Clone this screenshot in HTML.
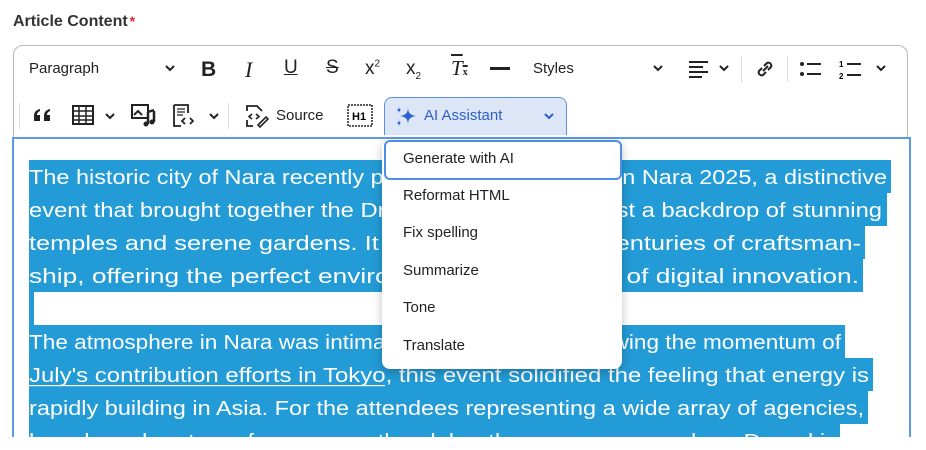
<!DOCTYPE html>
<html><head><meta charset="utf-8"><style>
*{margin:0;padding:0;box-sizing:border-box}
html,body{width:926px;height:450px;overflow:hidden}
body{background:#fff;font-family:"Liberation Sans",sans-serif;position:relative;color:#222}
.a{position:absolute}
.lbl{left:13px;top:13px;font-size:16px;font-weight:bold;color:#333}
.lbl span{color:#d9262b;font-size:14px;vertical-align:top;margin-left:2px}
.tb{left:13px;top:45px;width:895px;height:120px;border:1px solid #b8b8b8;border-radius:10px}
.t{font-size:15px;color:#222}
.ic{position:absolute;font-size:19px;color:#222;line-height:1}
.sep{position:absolute;width:1px;height:26px;background:#ddd}
.clip{left:0;top:0;width:926px;height:437px;overflow:hidden}
.ed{left:12px;top:137px;width:899px;height:330px;border:2px solid #5b9ae8;background:#fff}
.hl{position:absolute;background:#239bd6;height:33px}
.ai{left:384px;top:97px;width:183px;height:38px;background:#dde6f6;border:1px solid #5b8de0;border-radius:8px 8px 0 0;border-bottom:none}
.dd{left:382px;top:140px;width:240px;height:229px;background:#fff;border-radius:8px;box-shadow:0 3px 10px rgba(0,0,0,.25)}
.it{position:absolute;left:21px;font-size:15px;color:#222}
</style></head><body>
<div class="a lbl">Article Content<span>*</span></div>
<div class="a tb"></div>
<!-- row 1 -->
<div class="a t" style="left:29px;top:60px">Paragraph</div>
<svg class="a" style="left:164px;top:63px" width="12" height="10"><path d="M2 3l4 4 4-4" stroke="#222" stroke-width="2" fill="none"/></svg>
<div class="ic" style="left:201px;top:59px;font-weight:bold;font-size:21px">B</div>
<div class="ic" style="left:245px;top:59px;font-style:italic;font-family:'Liberation Serif';font-size:22px">I</div>
<div class="ic" style="left:284px;top:58px;font-size:19px;text-decoration:underline">U</div>
<div class="ic" style="left:326px;top:58px;text-decoration:line-through">S</div>
<div class="ic" style="left:365px;top:59px">x<sup style="font-size:10px">2</sup></div>
<div class="ic" style="left:406px;top:59px">x<sub style="font-size:10px">2</sub></div>
<div class="ic" style="left:451px;top:58px;font-style:italic;text-decoration:overline;font-family:'Liberation Serif';font-size:21px">T<span style="font-size:10px;font-style:normal;font-weight:bold">x</span></div>
<div class="a" style="left:490px;top:67px;width:20px;height:3px;background:#222"></div>
<div class="a t" style="left:533px;top:60px">Styles</div>
<svg class="a" style="left:652px;top:63px" width="12" height="10"><path d="M2 3l4 4 4-4" stroke="#222" stroke-width="2" fill="none"/></svg>
<svg class="a" style="left:688px;top:59px" width="22" height="20"><path d="M1 3h19M1 8h14M1 13h19M1 18h13" stroke="#222" stroke-width="2"/></svg>
<svg class="a" style="left:718px;top:63px" width="12" height="10"><path d="M2 3l4 4 4-4" stroke="#222" stroke-width="2" fill="none"/></svg>
<div class="sep" style="left:741px;top:56px"></div>
<svg class="a" style="left:754px;top:58px" width="22" height="22"><path d="M9 13l5-5M8 10l-3 3a3 3 0 004 4l3-3M14 12l3-3a3 3 0 00-4-4l-3 3" stroke="#222" stroke-width="2" fill="none"/></svg>
<div class="sep" style="left:787px;top:56px"></div>
<svg class="a" style="left:799px;top:58px" width="24" height="22"><circle cx="3" cy="6" r="2" fill="#222"/><circle cx="3" cy="16" r="2" fill="#222"/><path d="M8 6h14M8 16h14" stroke="#222" stroke-width="2"/></svg>
<svg class="a" style="left:839px;top:58px" width="24" height="22"><text x="0" y="9" font-size="8" font-family="Liberation Sans" font-weight="bold">1</text><text x="0" y="21" font-size="8" font-family="Liberation Sans" font-weight="bold">2</text><path d="M8 6h14M8 17h14" stroke="#222" stroke-width="2"/></svg>
<svg class="a" style="left:875px;top:63px" width="12" height="10"><path d="M2 3l4 4 4-4" stroke="#222" stroke-width="2" fill="none"/></svg>
<!-- row 2 -->
<div class="sep" style="left:19px;top:103px"></div>
<svg class="a" style="left:33px;top:108px" width="20" height="14"><path d="M1 13V8c0-4 2-6 6-7v2c-2 1-3 2-3 4h3v6zM11 13V8c0-4 2-6 6-7v2c-2 1-3 2-3 4h3v6z" fill="#222"/></svg>
<svg class="a" style="left:72px;top:105px" width="22" height="20"><rect x="1" y="1" width="20" height="18" fill="none" stroke="#222" stroke-width="2"/><path d="M1 6h20M1 11h20M1 15h20M7 1v18M14 1v18" stroke="#222" stroke-width="1.5"/></svg>
<svg class="a" style="left:104px;top:111px" width="12" height="10"><path d="M2 3l4 4 4-4" stroke="#222" stroke-width="2" fill="none"/></svg>
<svg class="a" style="left:131px;top:104px" width="26" height="24"><rect x="1" y="1" width="16" height="13" fill="none" stroke="#222" stroke-width="2"/><path d="M3 11l4-4 4 4" stroke="#222" stroke-width="2" fill="none"/><path d="M17 8v12M23 7v11M17 8l6-2" stroke="#222" stroke-width="2.5" fill="none"/><circle cx="15" cy="20" r="2.5" fill="#222"/><circle cx="21" cy="18" r="2.5" fill="#222"/></svg>
<svg class="a" style="left:172px;top:104px" width="24" height="24"><path d="M2 1h14v8M2 1v21h7" stroke="#222" stroke-width="1.8" fill="none"/><path d="M5 5h8M5 8h8M5 11h6" stroke="#222" stroke-width="1.2"/><path d="M13 14l-3 3 3 3M18 14l3 3-3 3" stroke="#222" stroke-width="1.8" fill="none"/></svg>
<svg class="a" style="left:208px;top:111px" width="12" height="10"><path d="M2 3l4 4 4-4" stroke="#222" stroke-width="2" fill="none"/></svg>
<div class="sep" style="left:228px;top:103px"></div>
<svg class="a" style="left:245px;top:104px" width="24" height="24"><path d="M2 7V2h10l5 5M2 16v6h6" stroke="#222" stroke-width="1.8" fill="none"/><path d="M7 10l-3 2.5 3 2.5M11 10l3 2.5-3 2.5M13 21l8-8 2 2-8 8z" stroke="#222" stroke-width="1.6" fill="none"/></svg>
<div class="a t" style="left:276px;top:107px">Source</div>
<svg class="a" style="left:347px;top:104px" width="26" height="24"><rect x="1" y="1" width="24" height="21" fill="none" stroke="#222" stroke-width="1.5" stroke-dasharray="2 1"/><text x="5" y="16" font-size="11" font-weight="bold" font-family="Liberation Sans">H1</text></svg>
<div class="a ai"></div>
<svg class="a" style="left:394px;top:104px" width="24" height="24"><path d="M14 3c0 6 2 8 8 9-6 1-8 3-8 9 0-6-2-8-8-9 6-1 8-3 8-9z" fill="#2c5fd0"/><path d="M5 2c0 3 1 4 3 4-2 0-3 1-3 4 0-3-1-4-3-4 2 0 3-1 3-4z" fill="#2c5fd0"/><path d="M5 15c0 3 1 4 3 4-2 0-3 1-3 4 0-3-1-4-3-4 2 0 3-1 3-4z" fill="#2c5fd0"/></svg>
<div class="a" style="left:424px;top:107px;font-size:15px;color:#2c5fd0">AI Assistant</div>
<svg class="a" style="left:543px;top:111px" width="12" height="10"><path d="M2 3l4 4 4-4" stroke="#2c5fd0" stroke-width="2" fill="none"/></svg>
<!-- editor -->
<div class="a clip">
<div class="a ed"></div>
<div class="hl" style="left:29px;top:160px;width:862px"></div>
<div class="hl" style="left:29px;top:193px;width:858px"></div>
<div class="hl" style="left:29px;top:226px;width:836px"></div>
<div class="hl" style="left:29px;top:259px;width:834px"></div>
<div class="hl" style="left:29px;top:292px;width:5px"></div>
<div class="hl" style="left:29px;top:325px;width:816px"></div>
<div class="hl" style="left:29px;top:358px;width:844px"></div>
<div class="hl" style="left:29px;top:391px;width:839px"></div>
<div class="hl" style="left:29px;top:424px;width:811px"></div>
<svg class="a" style="left:0;top:0" width="926" height="450" font-family="Liberation Sans" font-size="20" fill="#fff">
<text x="29" y="184" textLength="858" lengthAdjust="spacingAndGlyphs">The historic city of Nara recently played host to DrupalCon Nara 2025, a distinctive</text>
<text x="29" y="217" textLength="853" lengthAdjust="spacingAndGlyphs">event that brought together the Drupal community against a backdrop of stunning</text>
<text x="29" y="250" textLength="832" lengthAdjust="spacingAndGlyphs">temples and serene gardens. It was a place where centuries of craftsman-</text>
<text x="29" y="283" textLength="830" lengthAdjust="spacingAndGlyphs">ship, offering the perfect environment for the future of digital innovation.</text>
<text x="29" y="349" textLength="812" lengthAdjust="spacingAndGlyphs">The atmosphere in Nara was intimate yet energizing. Following the momentum of</text>
<text x="29" y="382" textLength="840" lengthAdjust="spacingAndGlyphs">July's contribution efforts in Tokyo, this event solidified the feeling that energy is</text>
<text x="29" y="415" textLength="835" lengthAdjust="spacingAndGlyphs">rapidly building in Asia. For the attendees representing a wide array of agencies,</text>
<text x="29" y="448" textLength="808" lengthAdjust="spacingAndGlyphs">brands and partners from across the globe, the message was clear: Drupal is</text>
<rect x="29" y="385" width="356" height="1.2" fill="#fff"/>
</svg>
</div>
<!-- dropdown -->
<div class="a dd">
<div class="a" style="left:2px;top:0;width:238px;height:40px;border:2px solid #4f8de6;border-radius:6px"></div>
<div class="it" style="top:10px">Generate with AI</div>
<div class="it" style="top:47px">Reformat HTML</div>
<div class="it" style="top:84px">Fix spelling</div>
<div class="it" style="top:122px">Summarize</div>
<div class="it" style="top:159px">Tone</div>
<div class="it" style="top:197px">Translate</div>
</div>
</body></html>
